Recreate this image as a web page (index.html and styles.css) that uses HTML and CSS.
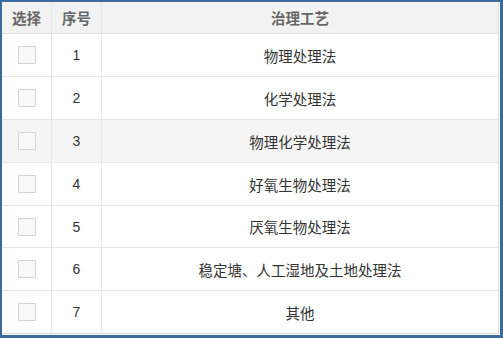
FILE: index.html
```html
<!DOCTYPE html>
<html lang="zh">
<head>
<meta charset="utf-8">
<link rel="stylesheet" href="styles.css">
</head>
<body>
<div class="frame">
  <div class="table">
    <div class="row head">
      <div class="cell c1">选择</div>
      <div class="cell c2">序号</div>
      <div class="cell c3">治理工艺</div>
    </div>
    <div class="row">
      <div class="cell c1"><span class="box"></span></div>
      <div class="cell c2">1</div>
      <div class="cell c3">物理处理法</div>
    </div>
    <div class="row">
      <div class="cell c1"><span class="box"></span></div>
      <div class="cell c2">2</div>
      <div class="cell c3">化学处理法</div>
    </div>
    <div class="row hover">
      <div class="cell c1"><span class="box"></span></div>
      <div class="cell c2">3</div>
      <div class="cell c3">物理化学处理法</div>
    </div>
    <div class="row">
      <div class="cell c1"><span class="box"></span></div>
      <div class="cell c2">4</div>
      <div class="cell c3">好氧生物处理法</div>
    </div>
    <div class="row short">
      <div class="cell c1"><span class="box"></span></div>
      <div class="cell c2">5</div>
      <div class="cell c3">厌氧生物处理法</div>
    </div>
    <div class="row">
      <div class="cell c1"><span class="box"></span></div>
      <div class="cell c2">6</div>
      <div class="cell c3">稳定塘、人工湿地及土地处理法</div>
    </div>
    <div class="row last">
      <div class="cell c1"><span class="box"></span></div>
      <div class="cell c2">7</div>
      <div class="cell c3">其他</div>
    </div>
  </div>
</div>
</body>
</html>
```

FILE: styles.css
```css
* { box-sizing: border-box; }
html, body { margin: 0; padding: 0; background: #fff; }
body {
  font-family: "Noto Sans CJK SC", "Noto Sans", sans-serif;
  width: 503px;
  height: 338px;
  overflow: hidden;
}
.frame {
  width: 503px;
  height: 338px;
  border-style: solid;
  border-color: #3a6b9c;
  border-width: 2px 3px 3px 2px;
  padding: 0 1px 1px 0;
  background: #fff;
}
.table {
  width: 497px;
  height: 332px;
  border-right: 1px solid #dcdcdc;
  border-bottom: 1px solid #dcdcdc;
  display: flex;
  flex-direction: column;
}
.row {
  display: grid;
  grid-template-columns: 50px 50px 1fr;
  height: 43px;
  border-bottom: 1px solid #e6e6e6;
}
.row.short { height: 42px; }
.row.last { border-bottom: none; height: 42px; }
.row.head {
  height: 32px;
  background: #f2f2f2;
  border-bottom: 1px solid #e2e2e2;
}
.row.hover { background: #f5f5f5; }
.cell {
  display: flex;
  align-items: center;
  justify-content: center;
  border-right: 1px solid #e6e6e6;
  font-size: 14.5px;
  color: #333;
}
.c3 { border-right: none; }
.head .cell {
  font-size: 14.5px;
  font-weight: bold;
  color: #666;
}
.c2 { font-family: "Liberation Sans", "Noto Sans CJK SC", sans-serif; font-size: 14px; }
.head .c2 { font-family: "Noto Sans CJK SC", sans-serif; font-size: 14.5px; }
.box {
  width: 18px;
  height: 18px;
  border: 1px solid #d2d2d2;
  background: #f9f9f9;
  border-radius: 1px;
}
```
